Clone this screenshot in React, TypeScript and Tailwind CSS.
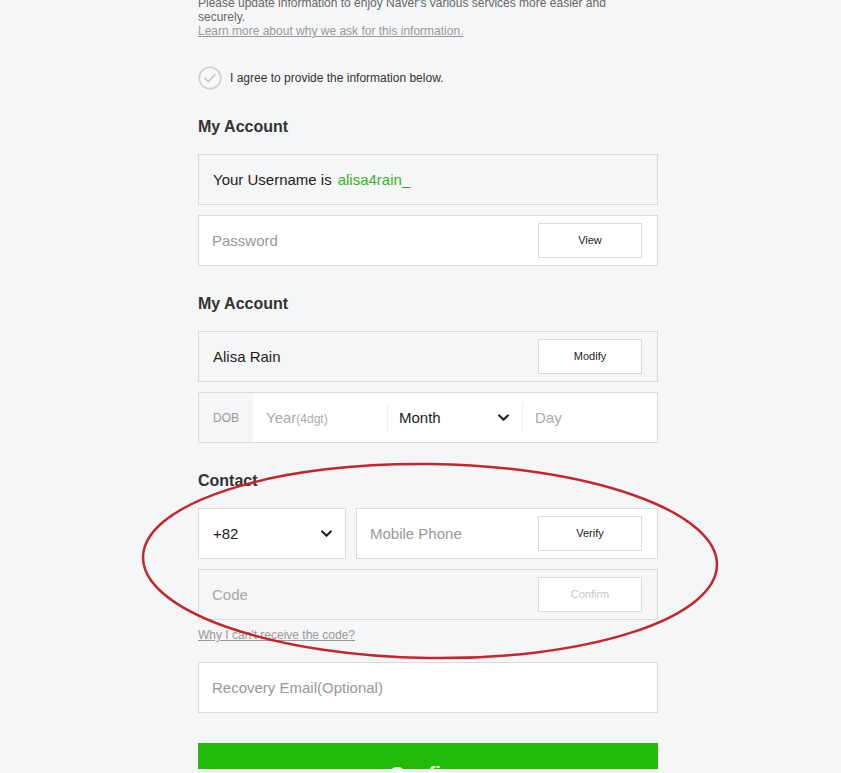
import React from "react";

function Chevron() {
  return (
    <svg className="w-[11px] h-[8px]" viewBox="0 0 11 8" fill="none">
      <path d="M1.2 1.5l4.3 4.3 4.3-4.3" stroke="#222" strokeWidth={2.2} strokeLinecap="round" strokeLinejoin="round" />
    </svg>
  );
}

function SmallButton({ label, disabled = false }: { label: string; disabled?: boolean }) {
  return (
    <button
      className={`w-[104px] h-[35px] bg-white border border-[#dadada] text-[11px] ${disabled ? "text-[#c8c8c8]" : "text-[#222]"}`}
    >
      {label}
    </button>
  );
}

export default function App() {
  return (
    <div
      className="relative min-h-[773px] bg-[#f5f6f7] overflow-hidden"
      style={{ fontFamily: '"Liberation Sans", Arial, sans-serif' }}
    >
      <div className="w-[460px] ml-[198px] flex flex-col">
        {/* intro text, scrolled off the top */}
        <div className="-mt-[4px] w-[420px] text-[12px] leading-[14px] text-[#666]">
          <p>Please update information to enjoy Naver's various services more easier and securely.</p>
          <a href="#" className="text-[#999] underline">Learn more about why we ask for this information.</a>
        </div>

        <label className="mt-[28px] flex items-center gap-[8px] h-[23px] text-[12px] text-[#333]">
          <svg className="w-[24px] h-[24px] shrink-0" viewBox="0 0 24 24" fill="none">
            <circle cx="12" cy="12" r="10.8" stroke="#cfcfcf" strokeWidth={1.6} fill="#f8f8f8" />
            <path d="M7 12.3l3.4 3.2 6.4-6.6" stroke="#c4c4c4" strokeWidth={1.6} strokeLinecap="round" strokeLinejoin="round" />
          </svg>
          I agree to provide the information below.
        </label>

        <h2 className="mt-[28px] text-[16px] leading-[20px] font-bold text-[#333]">My Account</h2>

        <div className="mt-[17px] h-[51px] flex items-center px-[14px] pt-[2px] border border-[#dadada] bg-[#f5f6f7] text-[15px] text-[#222]">
          Your Username is <span className="ml-[6px] text-[#3fae2a]">alisa4rain_</span>
        </div>
        <div className="mt-[10px] h-[51px] flex items-center justify-between pl-[13px] pr-[15px] border border-[#dadada] bg-white">
          <span className="text-[15px] text-[#999] pt-[2px]">Password</span>
          <SmallButton label="View" />
        </div>

        <h2 className="mt-[28px] text-[16px] leading-[20px] font-bold text-[#333]">My Account</h2>

        <div className="mt-[17px] h-[51px] flex items-center justify-between pl-[14px] pr-[15px] border border-[#dadada] bg-[#f5f6f7]">
          <span className="text-[15px] text-[#222] pt-[2px]">Alisa Rain</span>
          <SmallButton label="Modify" />
        </div>
        <div className="mt-[10px] h-[51px] flex border border-[#dadada] bg-white">
          <div className="w-[54px] flex items-center justify-center bg-[#f5f6f7] text-[12px] text-[#999]">DOB</div>
          <div className="w-[134px] flex items-center pl-[13px] pt-[2px] text-[#aaa]">
            <span className="text-[15px]">Year</span>
            <span className="text-[12px]">(4dgt)</span>
          </div>
          <div className="my-[10px] w-px bg-[#eee]" />
          <div className="w-[134px] flex items-center justify-between pl-[11px] pr-[13px]">
            <span className="text-[15px] text-[#222] pt-[2px]">Month</span>
            <Chevron />
          </div>
          <div className="my-[10px] w-px bg-[#eee]" />
          <div className="flex-1 flex items-center pl-[12px] pt-[2px] text-[15px] text-[#aaa]">Day</div>
        </div>

        <h2 className="mt-[28px] text-[16px] leading-[20px] font-bold text-[#333]">Contact</h2>

        <div className="mt-[17px] h-[51px] flex gap-[10px]">
          <div className="w-[148px] flex items-center justify-between pl-[14px] pr-[13px] border border-[#dadada] bg-white">
            <span className="text-[15px] text-[#222] pt-[2px]">+82</span>
            <Chevron />
          </div>
          <div className="flex-1 flex items-center justify-between pl-[13px] pr-[15px] border border-[#dadada] bg-white">
            <span className="text-[15px] text-[#999] pt-[2px]">Mobile Phone</span>
            <SmallButton label="Verify" />
          </div>
        </div>
        <div className="mt-[10px] h-[51px] flex items-center justify-between pl-[13px] pr-[15px] border border-[#dadada] bg-[#f5f6f7]">
          <span className="text-[15px] text-[#aaa] pt-[2px]">Code</span>
          <SmallButton label="Confirm" disabled />
        </div>

        <a href="#" className="mt-[8px] text-[12px] leading-[14px] text-[#999] underline self-start">
          Why I can't receive the code?
        </a>

        <div className="mt-[20px] h-[51px] flex items-center pl-[13px] pt-[2px] border border-[#dadada] bg-white text-[15px] text-[#999]">
          Recovery Email(Optional)
        </div>

        <div className="mt-[30px] h-[26px] overflow-hidden">
          <button className="w-full h-[52px] flex justify-center items-start pt-[19px] bg-[#22bb0a] text-white text-[20px] leading-[24px] font-bold">
            Confirm
          </button>
        </div>
      </div>

      {/* red annotation */}
      <svg className="absolute left-0 top-0 w-[841px] h-[773px] pointer-events-none" viewBox="0 0 841 773">
        <ellipse cx="430" cy="561" rx="287" ry="97" fill="none" stroke="#c4262e" strokeWidth={2.5} transform="rotate(0.8 430 561)" />
      </svg>
    </div>
  );
}
